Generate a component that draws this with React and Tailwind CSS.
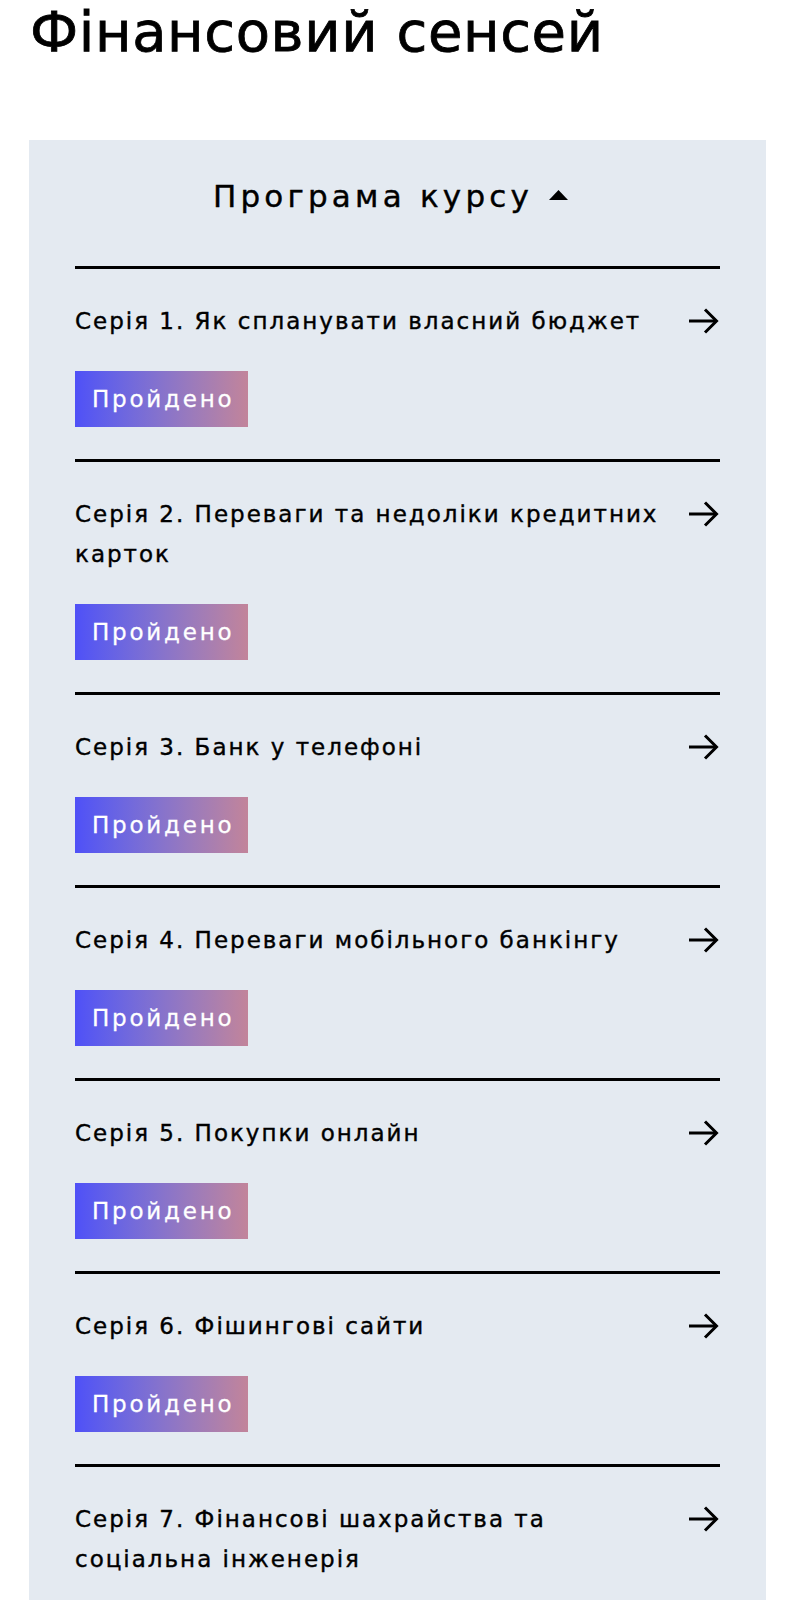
import React from 'react';

const SERIES = [
  { title: 'Серія 1. Як спланувати власний бюджет', done: true },
  { title: 'Серія 2. Переваги та недоліки кредитних карток', done: true },
  { title: 'Серія 3. Банк у телефоні', done: true },
  { title: 'Серія 4. Переваги мобільного банкінгу', done: true },
  { title: 'Серія 5. Покупки онлайн', done: true },
  { title: 'Серія 6. Фішингові сайти', done: true },
  { title: 'Серія 7. Фінансові шахрайства та соціальна інженерія', done: false },
];

function Arrow() {
  return (
    <svg width="32" height="32" viewBox="0 0 32 32" fill="none" stroke="currentColor" strokeWidth="3" className="flex-shrink-0 mt-1">
      <path d="M1 16h27" />
      <path d="M17 4.5l11.5 11.5-11.5 11.5" />
    </svg>
  );
}

export default function App() {
  return (
    <div className="min-h-screen bg-white text-black px-[29px]" style={{ fontFamily: '"DejaVu Sans", "Noto Sans", sans-serif' }}>
      <h1 className="text-[56px] leading-[60px] font-normal pt-[2px] pl-[1px] tracking-[0.6px] [-webkit-text-stroke:0.8px]">
        Фінансовий сенсей
      </h1>

      <section className="mt-[78px] bg-[#e4eaf1] px-[46px] pt-[38px] pb-[20px]">
        <button className="w-full flex items-center justify-center gap-[16px] pr-[14px] text-[31px] leading-[36px] font-normal tracking-[4.2px] [-webkit-text-stroke:0.4px]">
          <span>Програма курсу</span>
          <svg width="19" height="10" viewBox="0 0 19 10" className="mt-[-2px]">
            <path d="M9.5 0L19 10H0z" fill="currentColor" />
          </svg>
        </button>

        <ul className="mt-[52px]">
          {SERIES.map((s) => (
            <li key={s.title} className="border-t-[3px] border-black pt-[32px] pb-[32px]">
              <div className="flex items-start justify-between gap-6">
                <p className="text-[23px] leading-[40px] font-normal tracking-[2px] max-w-[600px] [-webkit-text-stroke:0.4px]">
                  {s.title}
                </p>
                <Arrow />
              </div>
              {s.done && (
                <span className="inline-block mt-[30px] h-[56px] pl-[17px] pr-[14px] leading-[56px] text-white text-[23px] font-normal tracking-[2.8px] [-webkit-text-stroke:0.3px] bg-gradient-to-r from-[#4f50f7] to-[#c2849a]">
                  Пройдено
                </span>
              )}
            </li>
          ))}
        </ul>
      </section>
    </div>
  );
}
